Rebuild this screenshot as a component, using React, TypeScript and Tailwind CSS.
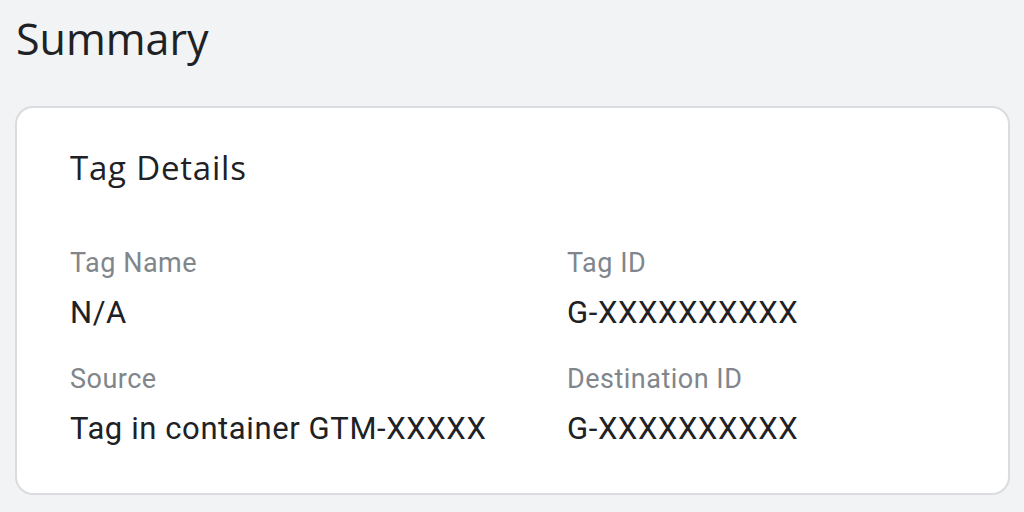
export default function App() {
  const label = "text-[27px] leading-none tracking-[0.5px] text-[#80868b]";
  const value = "text-[31px] leading-none tracking-[0.6px] text-[#202124]";
  return (
    <div className="w-[1024px] h-[512px] bg-[#f1f3f4] overflow-hidden" style={{ fontFamily: "Roboto, 'Liberation Sans', sans-serif" }}>
      <div className="pt-[17px] pl-[16px] h-[106px]">
        <h1 className="text-[43px] leading-none text-[#202124]" style={{ fontFamily: "'Open Sans', Roboto, sans-serif" }}>Summary</h1>
      </div>
      <div className="ml-[15px] w-[995px] h-[389px] bg-white border-2 border-[#dadce0] rounded-[18px] pl-[53px] pt-[43px]">
        <h2 className="text-[33px] leading-none tracking-[0.8px] text-[#202124]" style={{ fontFamily: "'Open Sans', Roboto, sans-serif" }}>Tag Details</h2>
        <div className="grid grid-cols-[497px_1fr] mt-[66px] gap-y-[38px]">
          <div className="flex flex-col gap-[20px]">
            <div className={label}>Tag Name</div>
            <div className={value}>N/A</div>
          </div>
          <div className="flex flex-col gap-[20px]">
            <div className={label}>Tag ID</div>
            <div className={value}>G-XXXXXXXXXX</div>
          </div>
          <div className="flex flex-col gap-[20px]">
            <div className={label}>Source</div>
            <div className={value}>Tag in container GTM-XXXXX</div>
          </div>
          <div className="flex flex-col gap-[20px]">
            <div className={label}>Destination ID</div>
            <div className={value}>G-XXXXXXXXXX</div>
          </div>
        </div>
      </div>
    </div>
  );
}
